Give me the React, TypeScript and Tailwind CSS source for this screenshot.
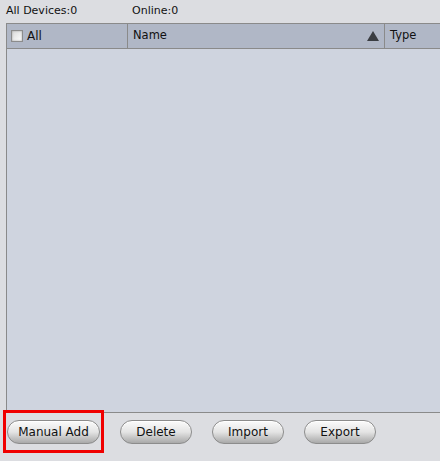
import React from "react";

const buttons = ["Manual Add", "Delete", "Import", "Export"];

function PillButton({ label, wide }: { label: string; wide?: boolean }) {
  return (
    <button
      className={`h-[24px] ${wide ? "w-[93px]" : "w-[72px]"} rounded-full border border-[#8c8c8c] bg-gradient-to-b from-[#fbfbfb] via-[#e4e4e4] to-[#a9a9a9] text-[12px] text-[#111] shadow-[inset_0_1px_0_#fff]`}
    >
      {label}
    </button>
  );
}

export default function App() {
  return (
    <div className="w-[440px] h-[461px] bg-[#dcdde1] font-['DejaVu_Sans',sans-serif] text-[11px] text-[#111] flex flex-col overflow-hidden">
      <div className="h-[23px] flex items-center pl-[6px] pb-[1px]">
        <span className="w-[126px]">All Devices:0</span>
        <span>Online:0</span>
      </div>

      <div className="ml-[6px] h-[390px] border border-r-0 border-[#8a8a8a] bg-[#cfd4df] flex flex-col">
        <div className="h-[25px] bg-[#b0b7c6] border-b border-[#8a8a8a] flex">
          <div className="w-[121px] flex items-center pl-[4px] gap-[4px] border-r border-[#8a8a8a]">
            <span className="w-[12px] h-[12px] border border-[#8c8c8c] bg-gradient-to-br from-[#d9d9d9] to-[#ffffff] shadow-[inset_0_0_2px_#999]" />
            <span className="text-[12px]">All</span>
          </div>
          <div className="w-[257px] flex items-center justify-between pl-[5px] pr-[5px] border-r border-[#8a8a8a]">
            <span className="text-[11.5px]">Name</span>
            <svg width="12" height="10" viewBox="0 0 12 10">
              <polygon points="6,0 12,10 0,10" fill="#3a3d42" />
            </svg>
          </div>
          <div className="flex-1 flex items-center pl-[5px]">
            <span className="text-[11.5px]">Type</span>
          </div>
        </div>
        <div className="flex-1" />
      </div>

      <div className="flex items-center pl-[7px] pt-[7px] gap-[20px]">
        {buttons.map((b, i) =>
          i === 0 ? (
            <div key={b} className="relative">
              <PillButton label={b} wide />
              <div className="absolute -left-[4px] -right-[4px] -top-[10px] -bottom-[9px] border-[3px] border-[#f00000] pointer-events-none" />
            </div>
          ) : (
            <PillButton key={b} label={b} />
          )
        )}
      </div>
    </div>
  );
}
